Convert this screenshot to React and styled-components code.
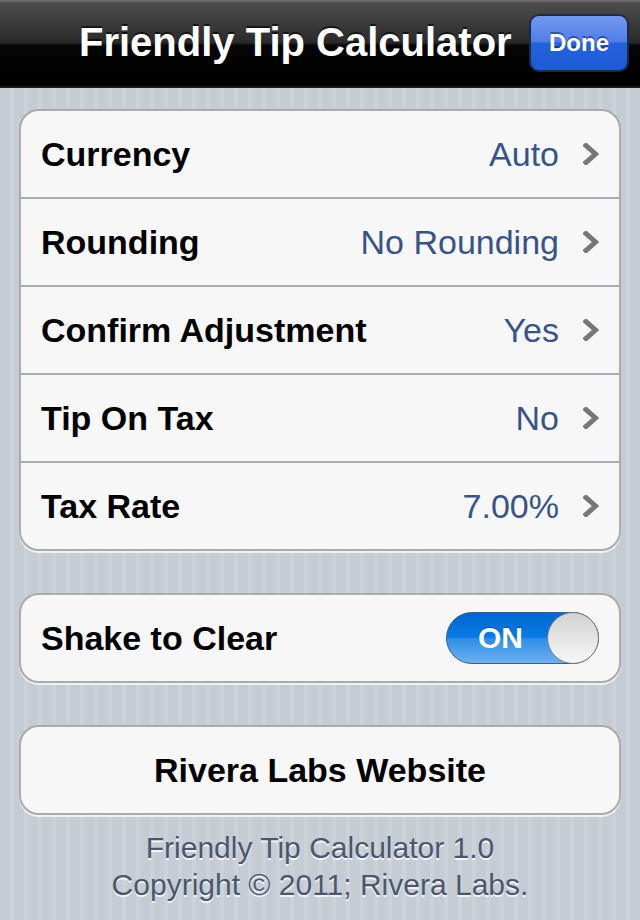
import styled, { createGlobalStyle } from "styled-components";

const GlobalStyle = createGlobalStyle`
  html, body {
    margin: 0;
    padding: 0;
    background: #c5ccd4;
  }
  body {
    font-family: "Liberation Sans", Arial, sans-serif;
  }
`;

const settings = [
  { label: "Currency", value: "Auto" },
  { label: "Rounding", value: "No Rounding" },
  { label: "Confirm Adjustment", value: "Yes" },
  { label: "Tip On Tax", value: "No" },
  { label: "Tax Rate", value: "7.00%" },
];

function Chevron() {
  return (
    <svg width="16" height="22" viewBox="0 0 16 22">
      <path
        d="M3 2.5 L12.5 11 L3 19.5"
        fill="none"
        stroke="#777"
        strokeWidth="5"
        strokeLinecap="square"
        strokeLinejoin="miter"
      />
    </svg>
  );
}

export default function App() {
  return (
    <Screen>
      <GlobalStyle />
      <NavBar>
        <Title>Friendly Tip Calculator</Title>
        <DoneButton>Done</DoneButton>
      </NavBar>
      <Content>
        <Group>
          {settings.map((s) => (
            <Row key={s.label}>
              <Label>{s.label}</Label>
              <Value>{s.value}</Value>
              <Chevron />
            </Row>
          ))}
        </Group>

        <Group>
          <Row>
            <Label>Shake to Clear</Label>
            <Toggle>
              <ToggleText>ON</ToggleText>
              <Knob />
            </Toggle>
          </Row>
        </Group>

        <Group>
          <ButtonRow>Rivera Labs Website</ButtonRow>
        </Group>

        <Footer>
          <div>Friendly Tip Calculator 1.0</div>
          <div>Copyright © 2011; Rivera Labs.</div>
        </Footer>
      </Content>
    </Screen>
  );
}

const Screen = styled.div`
  width: 640px;
  height: 920px;
  overflow: hidden;
  background: repeating-linear-gradient(
    90deg,
    #c5ccd4 0px,
    #c5ccd4 10px,
    #cbd2d9 10px,
    #cbd2d9 14px
  );
`;

const NavBar = styled.div`
  border-top: 2px solid #6a6a6a;
  border-bottom: 2px solid #1a1a1a;
  box-sizing: border-box;
  height: 88px;
  background: linear-gradient(
    to bottom,
    #4e4e4e 0%,
    #2a2a2a 48%,
    #050505 52%,
    #000 100%
  );
  display: flex;
  align-items: center;
  padding: 0 11px 0 79px;
  gap: 16px;
`;

const Title = styled.h1`
  margin: 0;
  flex: 1;
  color: #fff;
  font-size: 40px;
  font-weight: bold;
  text-shadow: 0 -2px 0 rgba(0, 0, 0, 0.6);
  white-space: nowrap;
  position: relative;
  top: -2px;
`;

const DoneButton = styled.div`
  flex-shrink: 0;
  width: 100px;
  height: 58px;
  box-sizing: border-box;
  border-radius: 10px;
  border: 2px solid #1b2a4a;
  background: linear-gradient(
    to bottom,
    #7399ee 0%,
    #4f7ee8 48%,
    #2462dc 50%,
    #1f5ad6 100%
  );
  color: #fff;
  font-size: 24px;
  font-weight: bold;
  display: flex;
  align-items: center;
  justify-content: center;
  text-shadow: 0 -2px 0 rgba(0, 0, 0, 0.4);
  margin-top: -2px;
`;

const Content = styled.div`
  padding: 21px 19px 0;
  display: flex;
  flex-direction: column;
  gap: 42px;
`;

const Group = styled.div`
  background: #f7f7f7;
  border: 2px solid #a9abae;
  border-radius: 20px;
  box-shadow: 0 2px 0 rgba(255, 255, 255, 0.7);
  overflow: hidden;
`;

const Row = styled.div`
  height: 86px;
  display: flex;
  align-items: center;
  padding: 0 20px 0 20px;
  gap: 16px;
  & + & {
    border-top: 2px solid #a9abae;
  }
`;

const Label = styled.div`
  flex: 1;
  font-size: 34px;
  font-weight: bold;
  color: #000;
`;

const Value = styled.div`
  font-size: 34px;
  color: #385487;
  margin-right: 8px;
`;

const Toggle = styled.div`
  width: 153px;
  height: 52px;
  box-sizing: border-box;
  border-radius: 26px;
  border: 1px solid #355d96;
  background: linear-gradient(
    to bottom,
    #0066cc 0%,
    #0a7ae6 48%,
    #2e8ee8 52%,
    #6fb2f0 100%
  );
  display: flex;
  align-items: center;
  justify-content: space-between;
`;

const ToggleText = styled.span`
  color: #fff;
  font-size: 30px;
  font-weight: bold;
  margin-left: 31px;
  text-shadow: 0 -1px 0 rgba(0, 0, 0, 0.3);
`;

const Knob = styled.div`
  width: 52px;
  height: 52px;
  box-sizing: border-box;
  border-radius: 50%;
  border: 1px solid #7a7a7a;
  background: linear-gradient(to bottom, #d2d2d2 0%, #f7f7f7 100%);
  margin-right: -1px;
`;

const ButtonRow = styled.div`
  height: 86px;
  display: flex;
  align-items: center;
  justify-content: center;
  font-size: 34px;
  font-weight: bold;
  color: #000;
`;

const Footer = styled.div`
  margin-top: -28px;
  text-align: center;
  color: #4c566c;
  font-size: 30px;
  line-height: 37px;
  text-shadow: 0 2px 0 rgba(255, 255, 255, 0.8);
`;
